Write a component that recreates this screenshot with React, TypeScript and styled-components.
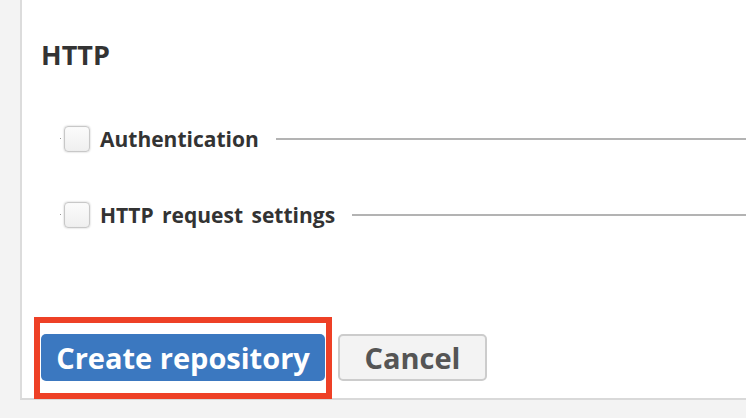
import React from "react";
import styled, { createGlobalStyle } from "styled-components";

const Global = createGlobalStyle`
  html, body { margin: 0; padding: 0; background: #f3f3f3; }
  body { font-family: "Open Sans", Lato, Arial, sans-serif; }
  * { box-sizing: border-box; }
`;

const Page = styled.div`
  width: 746px;
  height: 418px;
  overflow: hidden;
  background: #f3f3f3;
`;

const Panel = styled.section`
  margin-left: 20px;
  height: 400px;
  background: #fff;
  border-left: 2px solid #dcdcdc;
  border-bottom: 2px solid #d9d9d9;
  display: flex;
  flex-direction: column;
`;

const Heading = styled.h2`
  margin: 38px 0 0 19px;
  font-size: 27px;
  line-height: 34px;
  font-weight: 700;
  color: #333;
`;

const Options = styled.div`
  margin-top: 54px;
  display: flex;
  flex-direction: column;
  gap: 50px;
`;

const Row = styled.label`
  position: relative;
  display: flex;
  align-items: center;
  height: 26px;
  padding-left: 42px;
  &::before {
    content: "";
    position: absolute;
    left: 38px;
    top: 12px;
    width: 1px;
    height: 1px;
    background: #999;
  }
`;

const Box = styled.span`
  width: 26px;
  height: 26px;
  border-radius: 4px;
  background: linear-gradient(#fbfbfb, #efefef);
  border: 1px solid #c8c8c8;
  box-shadow: 0 0 2px rgba(0, 0, 0, 0.25), inset 0 0 1px rgba(0, 0, 0, 0.1);
  flex-shrink: 0;
`;

const LabelText = styled.span`
  margin-left: 10px;
  font-size: 21px;
  word-spacing: 3px;
  font-weight: 700;
  color: #333;
  white-space: nowrap;
`;

const Rule = styled.span`
  flex: 1;
  height: 2px;
  margin-left: 17px;
  background: #b3b3b3;
`;

const Footer = styled.div`
  margin-top: auto;
  padding-left: 12px;
  display: flex;
  align-items: flex-start;
  margin-bottom: -1px;
`;

const Highlight = styled.div`
  border: 6px solid #ee4026;
  padding: 11px 1px 12px 1px;
  display: flex;
`;

const Button = styled.button<{ $primary?: boolean }>`
  height: 47px;
  width: ${(p) => (p.$primary ? "284px" : "149px")};
  border-radius: 5px;
  font-family: "Open Sans", Lato, Arial, sans-serif;
  font-size: 29px;
  font-weight: 700;
  padding: 0;
  cursor: pointer;
  background: ${(p) => (p.$primary ? "#3b78c0" : "#f3f3f3")};
  color: ${(p) => (p.$primary ? "#fff" : "#555")};
  border: ${(p) => (p.$primary ? "none" : "2px solid #cccccc")};
`;

const CancelWrap = styled.div`
  margin-left: 6px;
  margin-top: 17px;
`;

export default function App() {
  return (
    <Page>
      <Global />
      <Panel>
        <Heading>HTTP</Heading>
        <Options>
          <Row>
            <Box />
            <LabelText>Authentication</LabelText>
            <Rule />
          </Row>
          <Row>
            <Box />
            <LabelText>HTTP request settings</LabelText>
            <Rule />
          </Row>
        </Options>
        <Footer>
          <Highlight>
            <Button $primary>Create repository</Button>
          </Highlight>
          <CancelWrap>
            <Button>Cancel</Button>
          </CancelWrap>
        </Footer>
      </Panel>
    </Page>
  );
}
